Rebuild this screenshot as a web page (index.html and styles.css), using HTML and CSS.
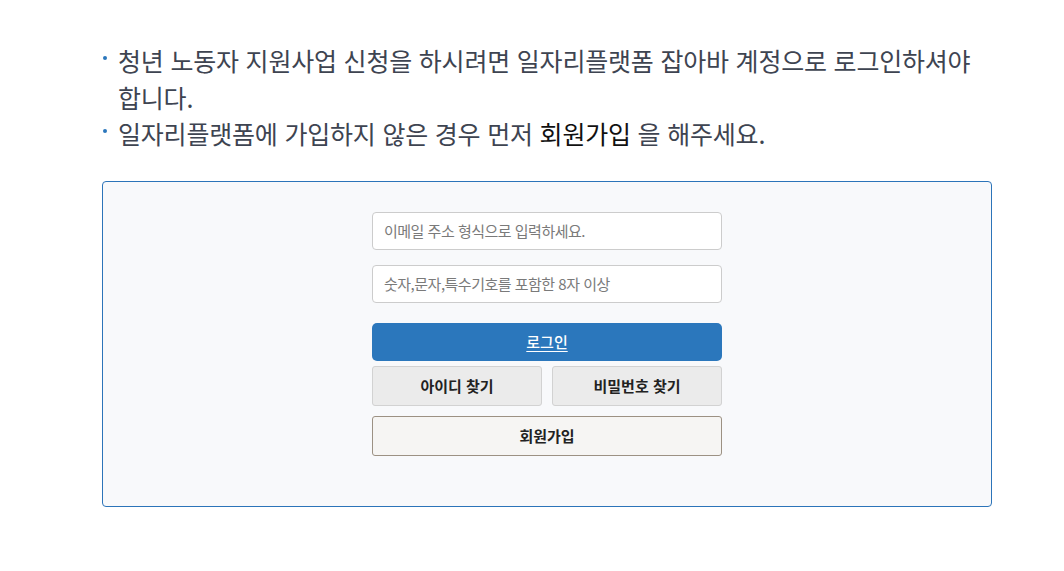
FILE: index.html
```html
<!DOCTYPE html>
<html lang="ko">
<head>
<meta charset="utf-8">
<link rel="stylesheet" href="styles.css">
</head>
<body>
<div class="page">
  <ul class="notice">
    <li>청년 노동자 지원사업 신청을 하시려면 일자리플랫폼 잡아바 계정으로 로그인하셔야 합니다.</li>
    <li>일자리플랫폼에 가입하지 않은 경우 먼저 <span class="strong">회원가입</span> 을 해주세요.</li>
  </ul>
  <div class="login-box">
    <form class="login-form">
      <input class="field" type="text" placeholder="이메일 주소 형식으로 입력하세요.">
      <input class="field" type="password" placeholder="숫자,문자,특수기호를 포함한 8자 이상">
      <a class="btn-login" href="#">로그인</a>
      <div class="find-row">
        <button type="button" class="btn-find">아이디 찾기</button>
        <button type="button" class="btn-find">비밀번호 찾기</button>
      </div>
      <button type="button" class="btn-join">회원가입</button>
    </form>
  </div>
</div>
</body>
</html>
```
FILE: styles.css
```css
html, body {
  margin: 0;
  padding: 0;
  background: #ffffff;
}
body {
  font-family: "Noto Sans CJK KR", "Noto Sans", sans-serif;
}
.page {
  padding: 42px 0 0 102px;
  width: 890px;
}
.notice {
  list-style: none;
  margin: 0;
  padding: 0 0 0 16px;
  font-size: 25px;
  line-height: 36.5px;
  color: #3e4451;
  letter-spacing: -0.2px;
}
.notice li {
  position: relative;
}
.notice li::before {
  content: "";
  position: absolute;
  left: -15px;
  top: 14px;
  width: 4px;
  height: 4px;
  border-radius: 50%;
  background: #2b77bc;
}
.strong {
  color: #111;
}
.login-box {
  margin-top: 29px;
  border: 1px solid #2c74b9;
  border-radius: 4px;
  background: #f8f9fb;
  height: 326px;
  box-sizing: border-box;
  padding-top: 30px;
}
.login-form {
  width: 350px;
  margin: 0 auto;
  display: flex;
  flex-direction: column;
}
.field {
  height: 38px;
  box-sizing: border-box;
  border: 1px solid #cccccc;
  border-radius: 4px;
  background: #fff;
  padding: 0 11px;
  font-family: inherit;
  font-size: 15px;
  letter-spacing: -0.5px;
  margin-bottom: 15px;
  outline: none;
}
.field::placeholder {
  color: #7a7a7a;
}
.btn-login {
  margin-top: 5px;
  height: 38px;
  border-radius: 5px;
  background: #2b77bc;
  color: #fff;
  font-size: 15px;
  font-weight: 500;
  display: flex;
  align-items: center;
  justify-content: center;
  text-decoration: underline;
  text-underline-offset: 3px;
}
.find-row {
  display: flex;
  gap: 10px;
  margin-top: 5px;
}
.btn-find {
  flex: 1;
  height: 40px;
  border: 1px solid #d2d2d2;
  border-radius: 3px;
  background: #ebebeb;
  font-family: inherit;
  font-size: 15px;
  font-weight: 700;
  color: #222;
}
.btn-join {
  margin-top: 10px;
  height: 40px;
  border: 1px solid #9c9183;
  border-radius: 3px;
  background: #f6f5f3;
  font-family: inherit;
  font-size: 15px;
  font-weight: 700;
  color: #222;
}
```
